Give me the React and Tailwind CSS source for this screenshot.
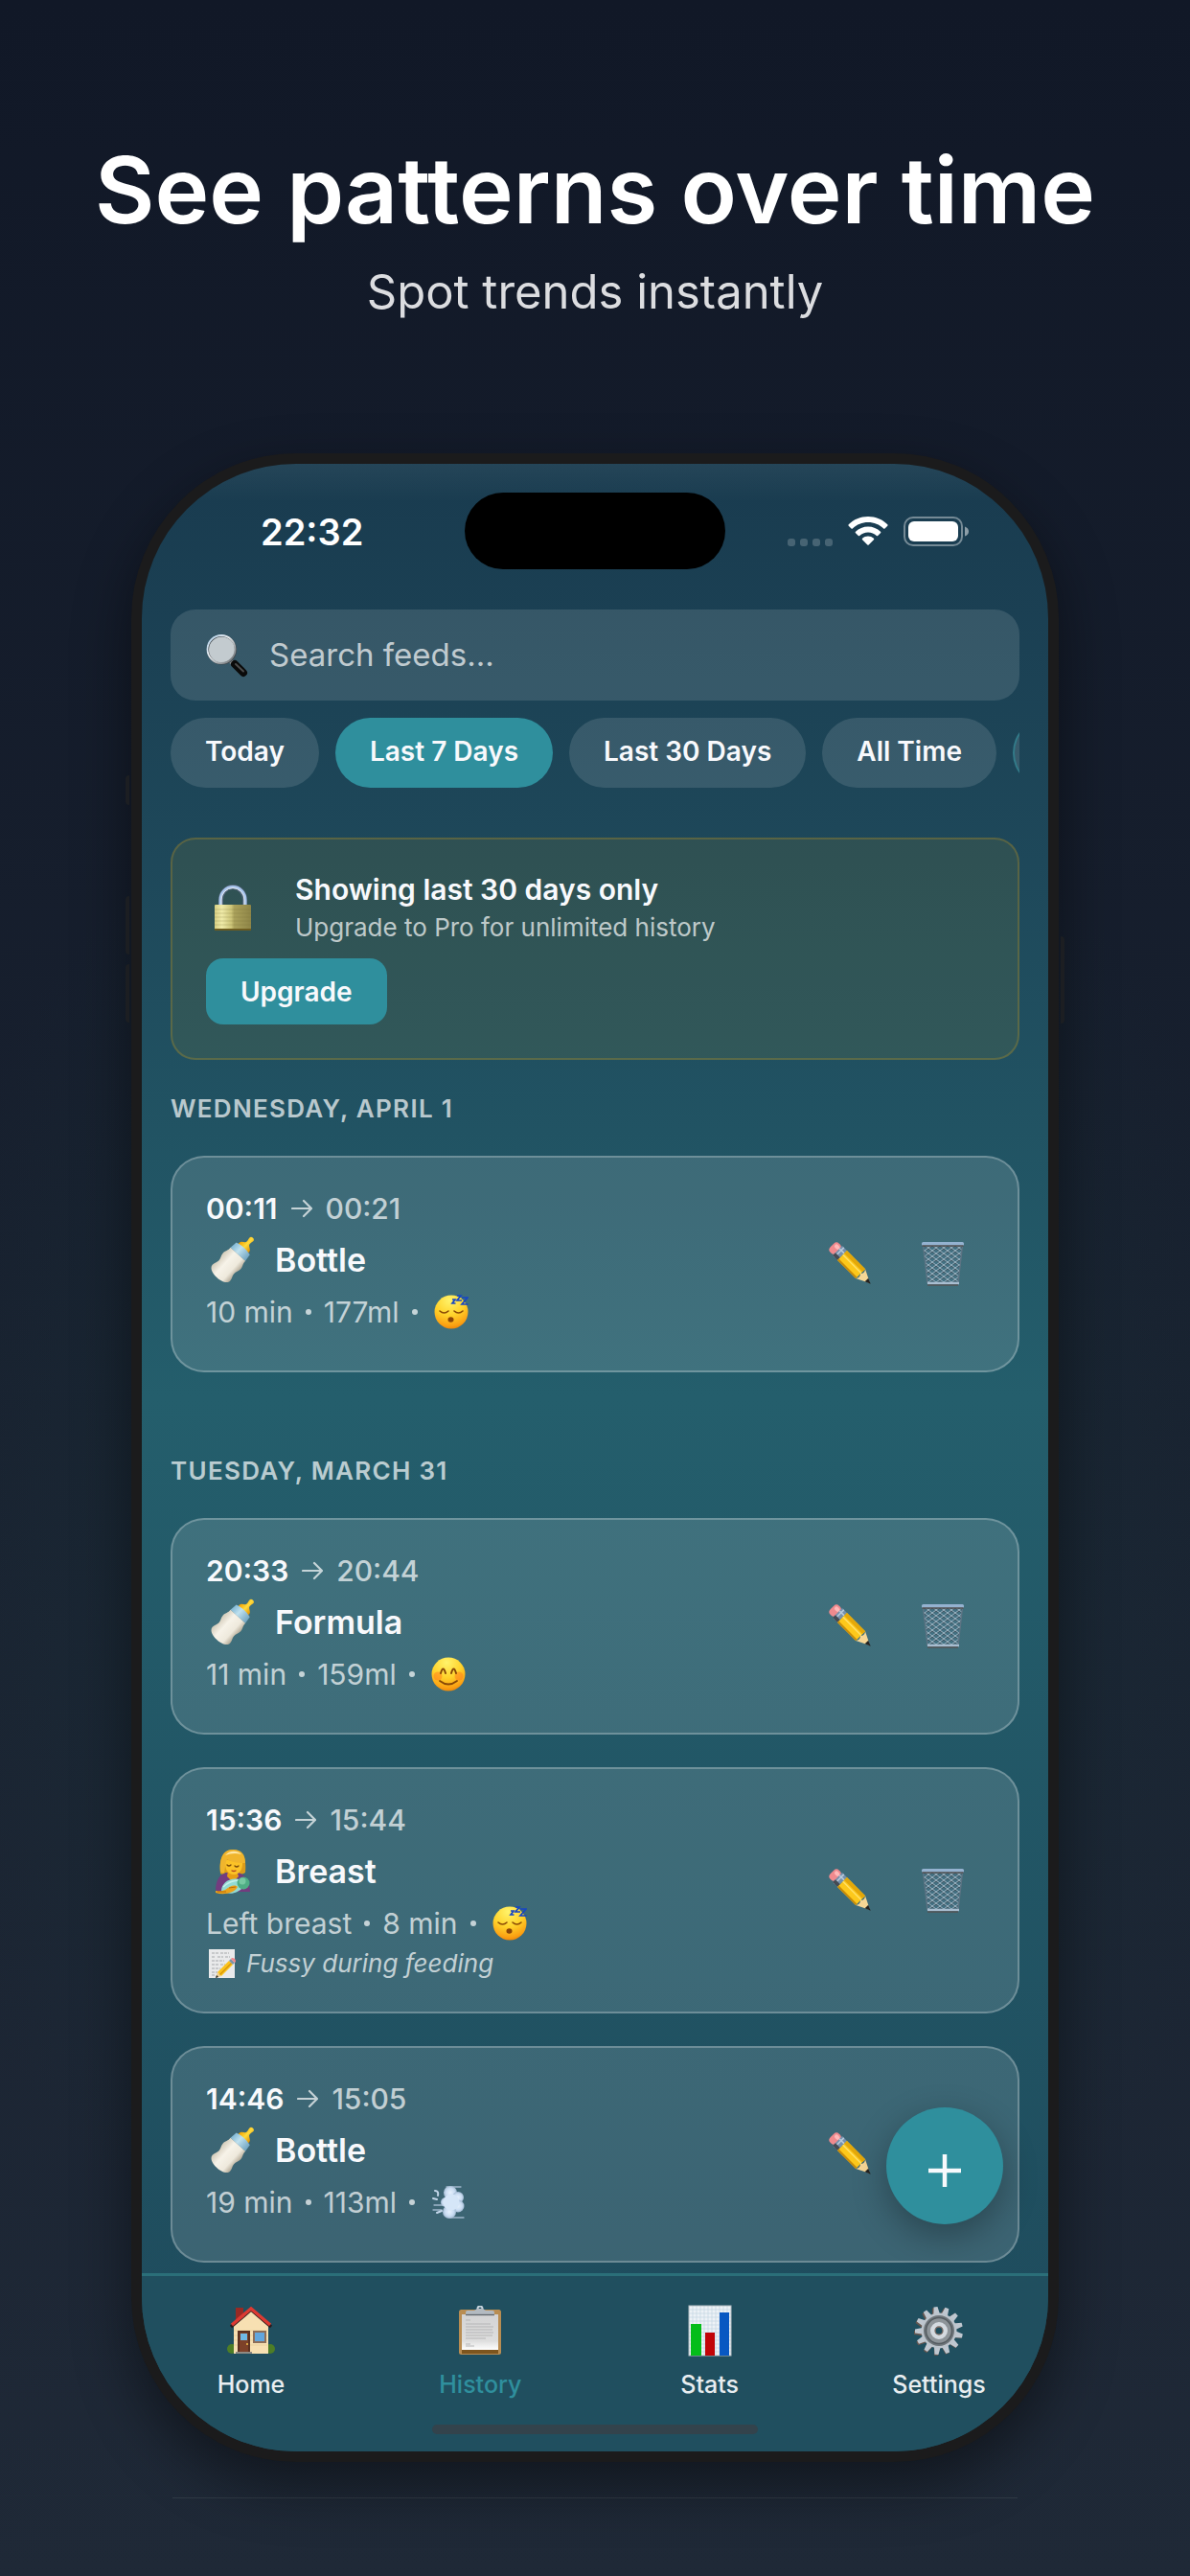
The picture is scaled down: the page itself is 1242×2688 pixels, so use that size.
import React, { useState } from 'react';

// --- Icons ---

function SearchIcon() {
  return (
    <svg viewBox="0 0 48 48" className="w-[48px] h-[48px] shrink-0" aria-hidden="true">
      <defs>
        <linearGradient id="lens-rim" x1="0" y1="0" x2="1" y2="1">
          <stop offset="0" stopColor="#a9cbe8" />
          <stop offset="0.4" stopColor="#e9edf0" />
          <stop offset="1" stopColor="#5c6266" />
        </linearGradient>
      </defs>
      <path d="M28 30 32 34" stroke="#85898c" strokeWidth="5" />
      <path d="M32 33 41 42" stroke="#0a0a0a" strokeWidth="8" strokeLinecap="round" />
      <path d="M33 33 41 40.500" stroke="#4b4b4b" strokeWidth="2" strokeLinecap="round" />
      <circle cx="18.500" cy="18" r="14.500" fill="#c3cbcf" stroke="#3f4549" strokeWidth="2" />
      <circle cx="18" cy="17.500" r="14.500" fill="none" stroke="url(#lens-rim)" strokeWidth="1.800" />
    </svg>
  );
}

function LockIcon() {
  return (
    <svg viewBox="0 0 56 56" className="w-[56px] h-[56px]" aria-hidden="true">
      <defs>
        <linearGradient id="lock-body">
          <stop offset="0" stopColor="#d8d084" />
          <stop offset="0.2" stopColor="#efeaa8" />
          <stop offset="0.46" stopColor="#ccc478" />
          <stop offset="0.54" stopColor="#aaa15b" />
          <stop offset="1" stopColor="#8e8547" />
        </linearGradient>
      </defs>
      <path d="M15.500 27v-7a12.500 13.500 0 0 1 25 0v7" fill="none" stroke="#53667a" strokeWidth="5" />
      <path d="M15 27v-7a13 13.500 0 0 1 26 0v7" fill="none" stroke="#a9c6ee" strokeWidth="3" />
      <path d="M16 27v-7a12 12.500 0 0 1 24 0v7" fill="none" stroke="#e3e9ee" strokeWidth="1" />
      <rect x="9" y="25" width="38" height="27" rx="1" fill="url(#lock-body)" />
      <path d="M9 30h38M9 34h38M9 38h38M9 42h38M9 46h38" stroke="#7d743a" strokeOpacity="0.25" />
      <path d="M9 51h38" stroke="#6d5c20" strokeWidth="2" />
    </svg>
  );
}

function BottleIcon() {
  return (
    <svg viewBox="0 0 54 54" className="w-[54px] h-[54px]" aria-hidden="true">
      <defs>
        <linearGradient id="milk">
          <stop offset="0" stopColor="#d3cbb9" />
          <stop offset="0.35" stopColor="#f7f3e9" />
          <stop offset="0.75" stopColor="#eee9dc" />
          <stop offset="1" stopColor="#b5ab98" />
        </linearGradient>
        <linearGradient id="teat">
          <stop offset="0" stopColor="#f2a100" />
          <stop offset="0.5" stopColor="#ffdc3d" />
          <stop offset="1" stopColor="#e29100" />
        </linearGradient>
        <linearGradient id="collar">
          <stop offset="0" stopColor="#7fb6d3" />
          <stop offset="0.4" stopColor="#bfe1ef" />
          <stop offset="1" stopColor="#6fa3c0" />
        </linearGradient>
      </defs>
      <g transform="translate(-1 2) rotate(42 27 27)">
        <path d="M20 6c0-3 5-3.500 5-6 0-3-.7-3-.7-5 0-3 5.400-3 5.400 0 0 2-.7 2-.7 5 0 2.500 5 3 5 6v3H20z" fill="url(#teat)" />
        <path d="M17.500 8q9.500-3 19 0l1 8H16.500z" fill="url(#collar)" />
        <path d="M16.500 16h21c-.5 4 2 6 2 10 0 3-2 5-2 8s2 5 2 8c0 9-25 9-25 0 0-3 2-5 2-8s-2-5-2-8c0-4 2.500-6 2-10z" fill="url(#milk)" />
      </g>
    </svg>
  );
}

function NursingIcon() {
  return (
    <svg viewBox="0 0 54 54" className="w-[54px] h-[54px]" aria-hidden="true">
      <path d="M15 29C14 18 15 4 28 4s14 13 13 24c-3 2-7 2-9 0H20c-1 2-4 2-5 1z" fill="#dc9c1a" />
      <path d="M10 45c1-10 4-15 12-17h11c8 2 12 7 13 20H11z" fill="#733c7f" />
      <path d="M23 26h9l2 6-6 6-6-6z" fill="#e79e14" />
      <path d="M20 14c5 2 12 2 18 0 1 9-2 16-9 16s-10-7-9-16z" fill="#fbc227" />
      <path d="M15 27C14 15 17 4 28 4c9 0 13 5 13 14-5 0-14 0-19-4-2 4-2 10-3 14-1 1-3 0-4-1z" fill="#f0b52d" />
      <path d="M20 10c4-5 12-6 17-1-6-2-12-1-17 1z" fill="#ffe7a4" />
      <path d="M22 20q2 2 4 0M30 21q2 2 4 0" fill="none" stroke="#7a4a0b" strokeWidth="1.300" strokeLinecap="round" />
      <path d="M27 26q2 1 4 0" fill="none" stroke="#b3441d" strokeWidth="1.300" strokeLinecap="round" />
      <path d="M16 47c0-8 9-14 18-12l5 8c-6 7-15 9-23 4z" fill="#93dbd3" />
      <path d="M18 43c5-5 11-7 17-7" fill="none" stroke="#c6f2ec" strokeWidth="1.500" />
      <circle cx="39" cy="39" r="6.500" fill="#4fae85" />
      <circle cx="38" cy="37" r="3.500" fill="#76c9a2" />
      <path d="M10 47c3 0 5 1 10-1 5-4 10-6 13-3-3 6-14 9-23 6z" fill="#eca21a" />
      <path d="M12 48h9M24 44l7-1" stroke="#b96f0a" strokeWidth="1" />
    </svg>
  );
}

function PencilIcon() {
  return (
    <svg viewBox="0 0 46 46" className="w-[46px] h-[46px]" aria-hidden="true">
      <g transform="translate(2 2) rotate(45) translate(2 0)">
        <rect x="0" y="-6.500" width="9" height="13" rx="4" fill="#f08a8e" />
        <rect x="2" y="-4.500" width="6" height="4" rx="2" fill="#ffb9b9" />
        <rect x="8" y="-7" width="7" height="14" fill="#7590ad" />
        <path d="M8-3h7M10.500-7v14" stroke="#b9cadb" strokeWidth="1.500" />
        <path d="M8 5h7" stroke="#454b54" strokeWidth="4" />
        <path d="M15-7h27v14H15z" fill="#fdc81b" />
        <path d="M15-7h27v4H15z" fill="#e4a80a" />
        <path d="M15-1h27" stroke="#ffe067" strokeWidth="1.500" />
        <path d="M15 6h27" stroke="#c98c0a" strokeWidth="2" />
        <path d="M42-7 56 0 42 7q3-3.500 0-7 3-3.500 0-7z" fill="#f6d695" />
        <path d="M51-2.500 57 0l-6 2.500z" fill="#222" />
      </g>
    </svg>
  );
}

function TrashIcon() {
  return (
    <svg viewBox="0 0 46 46" className="w-[46px] h-[46px]" aria-hidden="true">
      <defs>
        <pattern id="mesh" width="8" height="6" patternUnits="userSpaceOnUse">
          <path d="M0 1 8 7M8 1 0 7M0-5 8 1M8-5 0 1" stroke="#43535e" strokeWidth="0.900" />
          <path d="M0 0 8 6M8 0 0 6" stroke="#a3bccb" strokeWidth="0.900" />
        </pattern>
      </defs>
      <path d="M2.500 4h41L39 44H7z" fill="#47748a" fillOpacity="0.5" />
      <path d="M2.500 4h41L39 44H7z" fill="url(#mesh)" />
      <path d="M2.500 4 7 43M43.500 4 39 43" stroke="#5c7383" strokeWidth="1.300" />
      <rect x="1" y="0" width="44" height="4" rx="1.500" fill="#94b2d0" />
      <path d="M1.500 4h43" stroke="#514f50" strokeWidth="1.600" />
      <path d="M7 43h33" stroke="#a8bdd0" strokeWidth="2.500" />
      <path d="M7 45h32" stroke="#55504f" strokeWidth="1.300" />
    </svg>
  );
}

function FaceGradient() {
  return (
    <defs>
      <radialGradient id="face" cx="0.45" cy="0.15" r="0.9">
        <stop offset="0" stopColor="#fff36b" />
        <stop offset="0.5" stopColor="#ffd32b" />
        <stop offset="0.85" stopColor="#fb9f12" />
        <stop offset="1" stopColor="#e97c05" />
      </radialGradient>
    </defs>
  );
}

function SleepyIcon() {
  return (
    <svg viewBox="0 0 36 36" className="w-[36px] h-[36px]" role="img" aria-label="Sleepy">
      <FaceGradient />
      <circle cx="18" cy="18" r="17.500" fill="url(#face)" />
      <path d="M6 17q4.500 4 9 0M21 17q4.500 4 9 0" fill="none" stroke="#8a4a06" strokeWidth="1.600" strokeLinecap="round" />
      <ellipse cx="17.500" cy="26" rx="3" ry="2.800" fill="#8a4508" />
      <path d="M19 5h3l-3 4h3.500M24 1h4l-4 5h5M29 3h6l-6 7h6.500" fill="none" stroke="#1746c4" strokeWidth="1.700" />
    </svg>
  );
}

function HappyIcon() {
  return (
    <svg viewBox="0 0 36 36" className="w-[36px] h-[36px]" role="img" aria-label="Happy">
      <FaceGradient />
      <circle cx="18" cy="18" r="17.500" fill="url(#face)" />
      <circle cx="7" cy="20" r="4.500" fill="#ff7a1c" fillOpacity="0.5" />
      <circle cx="29" cy="20" r="4.500" fill="#ff7a1c" fillOpacity="0.5" />
      <path d="M10 17q2.500-9 5 0M21 17q2.500-9 5 0" fill="none" stroke="#874706" strokeWidth="2" strokeLinecap="round" />
      <path d="M9 25q9 7 18 0" fill="none" stroke="#874706" strokeWidth="1.800" strokeLinecap="round" />
    </svg>
  );
}

function GassyIcon() {
  return (
    <svg viewBox="0 0 36 36" className="w-[36px] h-[36px]" role="img" aria-label="Gassy">
      <defs>
        <radialGradient id="puff">
          <stop offset="0" stopColor="#e6f1fd" />
          <stop offset="0.65" stopColor="#c9dcf2" />
          <stop offset="1" stopColor="#a3bad2" />
        </radialGradient>
      </defs>
      <path d="M16 2h15M20 34h14M3 21h10M2 26h9" stroke="#9fb6cc" strokeWidth="1.300" strokeLinecap="round" />
      <circle cx="20" cy="8" r="7" fill="url(#puff)" />
      <circle cx="28" cy="13" r="6" fill="url(#puff)" />
      <circle cx="28" cy="22" r="6.500" fill="url(#puff)" />
      <circle cx="19" cy="28" r="7" fill="url(#puff)" />
      <circle cx="15" cy="18" r="5" fill="url(#puff)" />
      <circle cx="21" cy="18" r="8.500" fill="#d5e6f8" />
      <path d="M4 6q4 0 3 5M2 14l4 1M6 29l5-2" fill="none" stroke="#c3d6ea" strokeWidth="2" strokeLinecap="round" />
    </svg>
  );
}

function NoteIcon() {
  return (
    <svg viewBox="0 0 32 32" className="w-[32px] h-[32px]" aria-hidden="true">
      <rect x="3" y="1" width="27" height="30" fill="#e9eaeb" />
      <path d="M6 5h7m2 0h9M6 9h4m2 0h6m2 0h5M6 13h13M6 17h7m2 0h5M6 21h9M6 25h6M6 28h4" stroke="#a5a8ab" strokeWidth="1" strokeDasharray="3 1" />
      <path d="M10 31l2-6 4 4z" fill="#f0cf8e" />
      <path d="m10 31 1-3 2 2z" fill="#222" />
      <path d="M12 25 24 13l4 4-12 12z" fill="#fbc31d" />
      <path d="M14.500 27.500 26.500 15.500" stroke="#d99708" strokeWidth="1.500" />
      <path d="m24 13 2-2 4 4-2 2z" fill="#7e93a8" />
      <path d="m26 11 1-1q4 0 4 4l-1 1z" fill="#f3898d" />
    </svg>
  );
}

function HomeIcon() {
  return (
    <svg viewBox="0 0 50 50" className="w-[50px] h-[50px]" aria-hidden="true">
      <rect x="9" y="1" width="8" height="15" fill="#962a25" />
      <circle cx="5" cy="44" r="5" fill="#4d7d26" />
      <circle cx="45" cy="44" r="5" fill="#4d7d26" />
      <path d="M7 20 25 4l18 16v29H7z" fill="#f7e0b2" />
      <path d="M7 25h35M7 30h35M7 35h35M7 40h35" stroke="#dfc38e" strokeOpacity="0.5" />
      <path d="M4 21 25 3l21 18" fill="none" stroke="#2a1b1c" strokeWidth="3.500" />
      <path d="M5 19 25 2l20 17" fill="none" stroke="#dd3a32" strokeWidth="3.500" />
      <rect x="11" y="25" width="13" height="23" fill="#5b3120" />
      <rect x="13" y="27" width="9" height="21" fill="#7d4129" />
      <rect x="14" y="28" width="7" height="7" fill="#6fb9e6" />
      <circle cx="21" cy="39" r="1" fill="#f2c14b" />
      <rect x="27" y="25" width="14" height="13" fill="#8d6e58" />
      <rect x="29" y="27" width="10" height="9" fill="#62a6dd" />
      <path d="M9 47h17v2H9z" fill="#8f8a83" />
    </svg>
  );
}

function ClipboardIcon() {
  return (
    <svg viewBox="0 0 50 52" className="w-[50px] h-[52px]" aria-hidden="true">
      <defs>
        <linearGradient id="paper" x1="0" y1="0" x2="0" y2="1">
          <stop offset="0" stopColor="#d3d3d4" />
          <stop offset="0.75" stopColor="#dedede" />
          <stop offset="1" stopColor="#fff" />
        </linearGradient>
      </defs>
      <rect x="3" y="4" width="44" height="47" rx="2.500" fill="#b98d52" />
      <path d="M6 46h38v4H6z" fill="#7d551e" />
      <rect x="6" y="9" width="38" height="37" fill="url(#paper)" />
      <path d="M10 15h5M10 19h26M10 22h29M10 25h28M10 28h29M10 31h28M10 34h21M10 40h5M10 42h9" stroke="#b5b5b6" strokeWidth="1" />
      <circle cx="25" cy="3" r="2.500" fill="none" stroke="#c7d4de" strokeWidth="2" />
      <path d="M10 9V7q0-2 2-2h7l3-2h6l3 2h7q2 0 2 2v2z" fill="#b3bac1" />
      <path d="M10 9.500h30" stroke="#60666b" strokeWidth="1.300" />
    </svg>
  );
}

function ChartIcon() {
  return (
    <svg viewBox="0 0 46 54" className="w-[46px] h-[54px]" aria-hidden="true">
      <rect x="1" y="1" width="44" height="52" fill="#edf2f6" />
      <path d="M1 5h44M1 9h44M1 13h44M1 17h44M1 21h44M1 25h44M1 29h44M1 33h44M1 37h44M1 41h44M1 45h44M1 49h44M5 1v52M9 1v52M13 1v52M17 1v52M21 1v52M25 1v52M29 1v52M33 1v52M37 1v52M41 1v52" stroke="#c3d5e2" strokeWidth="0.700" />
      <rect x="1" y="1" width="44" height="52" fill="none" stroke="#b4bdc3" />
      <rect x="3" y="20" width="11" height="33" fill="#04bd19" />
      <rect x="18" y="29" width="10" height="24" fill="#c10508" />
      <rect x="33" y="8" width="10" height="45" fill="#0858c2" />
    </svg>
  );
}

function GearIcon() {
  const teeth = Array.from({ length: 13 }, (_, i) => (i * 360) / 13 - 8);
  return (
    <svg viewBox="0 0 52 52" className="w-[52px] h-[52px]" aria-hidden="true">
      {teeth.map((angle) => (
        <path key={`s${angle}`} d="M22 9.500 23.500 1h4l1 8.500z" fill="#66564f" transform={`translate(-1 1) rotate(${angle} 26 26)`} />
      ))}
      {teeth.map((angle) => (
        <path key={angle} d="M22.500 10 24 1h4l1.500 9z" fill="#bfc7d0" transform={`rotate(${angle} 26 26)`} />
      ))}
      <circle cx="26" cy="26" r="18.500" fill="#bcc4cc" />
      <circle cx="26" cy="26" r="16" fill="#6f767b" />
      <circle cx="26" cy="26" r="13.500" fill="#8d9499" stroke="#555c61" strokeWidth="1.500" />
      <circle cx="26" cy="26" r="6.500" fill="none" stroke="#d4dae0" strokeWidth="5" />
      <circle cx="26" cy="26" r="4" fill="#204f5f" stroke="#7d6d66" strokeWidth="1.300" />
    </svg>
  );
}

function WifiIcon() {
  return (
    <svg viewBox="0 0 42 31" className="w-[42px] h-[31px]" fill="#fff" aria-hidden="true">
      <path d="M21 0C13 0 6 3 .7 8.300a1 1 0 0 0 0 1.400L3.500 12.500a1 1 0 0 0 1.400 0C9.200 8.300 14.800 6 21 6s11.800 2.300 16.100 6.500a1 1 0 0 0 1.400 0l2.800-2.800a1 1 0 0 0 0-1.400C36 3 29 0 21 0z" />
      <path d="M21 10.500c-5 0-9.600 2-13 5.200a1 1 0 0 0 0 1.500l2.800 2.700a1 1 0 0 0 1.400 0c2.300-2.200 5.400-3.500 8.800-3.500s6.500 1.300 8.800 3.500a1 1 0 0 0 1.400 0l2.800-2.700a1 1 0 0 0 0-1.500c-3.400-3.200-8-5.200-13-5.200z" />
      <path d="M21 20.500c-2.300 0-4.300.8-5.900 2.200a1 1 0 0 0 0 1.500l5.200 5.200a1 1 0 0 0 1.400 0l5.200-5.200a1 1 0 0 0 0-1.500 9 9 0 0 0-5.900-2.200z" />
    </svg>
  );
}

function BatteryIcon() {
  return (
    <svg viewBox="0 0 68 31" className="w-[68px] h-[31px]" aria-hidden="true">
      <rect x="1" y="1" width="60" height="29" rx="9" fill="none" stroke="#fff" strokeOpacity="0.4" strokeWidth="2" />
      <rect x="5" y="5" width="52" height="21" rx="6" fill="#fff" />
      <path d="M64 10.500q4 1.500 4 5t-4 5z" fill="#fff" fillOpacity="0.5" />
    </svg>
  );
}

function ArrowIcon() {
  return (
    <svg viewBox="0 0 22 22" className="w-[22px] h-[22px]" fill="none" stroke="currentColor" strokeWidth="2.200" strokeLinecap="round" strokeLinejoin="round" aria-hidden="true">
      <path d="M1 11h20M13 3l8 8-8 8" />
    </svg>
  );
}

// --- Data ---

const FILTERS = ['Today', 'Last 7 Days', 'Last 30 Days', 'All Time'];

const DAYS = [
  {
    label: 'WEDNESDAY, APRIL 1',
    feeds: [
      { start: '00:11', end: '00:21', type: 'Bottle', icon: BottleIcon, details: ['10 min', '177ml'], mood: SleepyIcon },
    ],
  },
  {
    label: 'TUESDAY, MARCH 31',
    feeds: [
      { start: '20:33', end: '20:44', type: 'Formula', icon: BottleIcon, details: ['11 min', '159ml'], mood: HappyIcon },
      { start: '15:36', end: '15:44', type: 'Breast', icon: NursingIcon, details: ['Left breast', '8 min'], mood: SleepyIcon, note: 'Fussy during feeding' },
      { start: '14:46', end: '15:05', type: 'Bottle', icon: BottleIcon, details: ['19 min', '113ml'], mood: GassyIcon },
    ],
  },
];

const TABS = [
  { label: 'Home', icon: HomeIcon },
  { label: 'History', icon: ClipboardIcon },
  { label: 'Stats', icon: ChartIcon },
  { label: 'Settings', icon: GearIcon },
];

// --- Screen parts ---

function StatusBar() {
  return (
    <div className="relative flex h-[152px] items-start justify-between pt-[50px]">
      <div className="absolute inset-x-0 top-[30px] mx-auto w-[272px] h-[80px] rounded-full bg-black" />
      <span className="pl-[124px] text-[38px] leading-[42px] font-semibold text-white">22:32</span>
      <div className="flex h-[36px] items-end gap-[16px] pr-[83px]">
        <div className="flex gap-[5px]">
          {[0, 1, 2, 3].map((dot) => (
            <span key={dot} className="size-2 rounded-[3px] bg-white/20" />
          ))}
        </div>
        <WifiIcon />
        <BatteryIcon />
      </div>
    </div>
  );
}

function UpgradeBanner() {
  return (
    <section className="mt-[52px] rounded-[26px] border-2 border-[#ffb107]/20 bg-[#ffb907]/8 px-[35px] pt-[34px] pb-[35px]">
      <div className="flex items-center gap-[37px]">
        <LockIcon />
        <div>
          <h2 className="text-[30px] leading-[36px] font-semibold">Showing last 30 days only</h2>
          <p className="mt-[7px] text-[26px] leading-[30px] text-white/70">Upgrade to Pro for unlimited history</p>
        </div>
      </div>
      <button className="mt-[17px] h-[69px] rounded-[18px] bg-[#2f8f9d] px-[36px] text-[28px] font-semibold">
        Upgrade
      </button>
    </section>
  );
}

function FeedCard({ feed }) {
  const TypeIcon = feed.icon;
  const MoodIcon = feed.mood;
  return (
    <article className="flex min-h-[226px] rounded-[35px] border-2 border-white/25 bg-white/13 pl-[35px] pr-[55px] py-[35px]">
      <div className="flex-1">
        <div className="flex items-center gap-[14px] text-[30px] leading-[36px] text-white/70">
          <span className="font-semibold text-[#f8f9fc]">{feed.start}</span>
          <ArrowIcon />
          <span className="font-medium">{feed.end}</span>
        </div>
        <div className="my-2 flex h-[56px] items-center gap-[18px]">
          <TypeIcon />
          <h3 className="text-[34px] leading-[40px] font-semibold">{feed.type}</h3>
        </div>
        <div className="flex h-[36px] items-center gap-[13px] text-[30px] leading-[36px] text-white/70">
          {feed.details.map((detail) => (
            <React.Fragment key={detail}>
              <span>{detail}</span>
              <span className="size-[6px] rounded-full bg-white/70" />
            </React.Fragment>
          ))}
          <span className="pl-[4px]"><MoodIcon /></span>
        </div>
        {feed.note && (
          <div className="mt-[9px] flex h-[30px] items-center gap-[10px] text-[26px] leading-[30px] italic text-white/70">
            <NoteIcon />
            <span>{feed.note}</span>
          </div>
        )}
      </div>
      <div className="flex items-center gap-[50px]">
        <button aria-label="Edit feed"><PencilIcon /></button>
        <button aria-label="Delete feed"><TrashIcon /></button>
      </div>
    </article>
  );
}

function TabBar({ active, onSelect }) {
  return (
    <nav className="relative h-[186px] border-t-3 border-[#2b6f79] bg-[#204f5f] px-[34px] pt-[30px]">
      <div className="flex justify-between">
        {TABS.map((tab) => {
          const Icon = tab.icon;
          return (
            <button
              key={tab.label}
              onClick={() => onSelect(tab.label)}
              className={`flex w-[160px] flex-col items-center gap-[14px] text-[25px] leading-[30px] font-medium ${
                active === tab.label ? 'text-[#2f8f9d]' : 'text-[#e8edf0]'
              }`}
            >
              <span className="flex h-[54px] items-center"><Icon /></span>
              {tab.label}
            </button>
          );
        })}
      </div>
      <div className="absolute inset-x-0 bottom-[18px] mx-auto h-[10px] w-[340px] rounded-full bg-[#33434c]" />
    </nav>
  );
}

// --- Page ---

export default function App() {
  const [range, setRange] = useState('Last 7 Days');
  const [tab, setTab] = useState('History');

  return (
    <div className="min-h-screen bg-[radial-gradient(ellipse_760px_900px_at_50%_60%,#1b3a3f80,transparent),linear-gradient(to_bottom,#111827,#1f2937)] px-[137px] pb-[80px] font-['Inter',sans-serif] text-[#f8f9fc]">
      <header className="-mx-[100px] flex flex-col items-center pt-[136px] text-center">
        <h1 className="text-[96px] leading-[124px] font-semibold text-white">See patterns over time</h1>
        <p className="mt-[12px] text-[49px] leading-[66px] text-[#dcdde0]">Spot trends instantly</p>
      </header>

      <div className="relative mt-[135px] rounded-[172px] bg-[#1b1b1c] p-[11px] shadow-[0_24px_60px_rgba(0,0,0,0.45)]">
        <span className="absolute -left-[6px] top-[336px] h-[31px] w-[4px] rounded-l-sm bg-[#1c1e22]" />
        <span className="absolute -left-[6px] top-[462px] h-[61px] w-[4px] rounded-l-sm bg-[#1c1e22]" />
        <span className="absolute -left-[6px] top-[533px] h-[61px] w-[4px] rounded-l-sm bg-[#1c1e22]" />
        <span className="absolute -right-[6px] top-[504px] h-[91px] w-[4px] rounded-r-sm bg-[#1c1e22]" />

        <div className="overflow-hidden rounded-[161px] bg-[linear-gradient(to_bottom,#ffffff0d,transparent_40px),linear-gradient(to_bottom,#193b4f,#1e485a_20%,#245e6c_47%,#1f4d5e_92%)]">
          <StatusBar />
          <main className="relative px-[30px] pb-[11px]">
            <label className="flex h-[95px] items-center gap-[20px] rounded-[26px] bg-white/12 px-[35px]">
              <SearchIcon />
              <input
                type="search"
                aria-label="Search feeds"
                placeholder="Search feeds..."
                className="w-full bg-transparent text-[33px] outline-none placeholder:text-white/70"
              />
            </label>

            <div className="mt-[18px] flex gap-[17px] overflow-hidden">
              {FILTERS.map((filter) => (
                <button
                  key={filter}
                  onClick={() => setRange(filter)}
                  className={`h-[73px] shrink-0 rounded-full px-[36px] pb-[3px] text-[28px] font-semibold ${
                    range === filter ? 'bg-[#2f8f9d]' : 'bg-white/12'
                  }`}
                >
                  {filter}
                </button>
              ))}
              <button aria-label="More filters" className="h-[73px] w-[150px] shrink-0 rounded-full border-2 border-[#2f8f9d]/60 bg-white/12" />
            </div>

            <UpgradeBanner />

            {DAYS.map((day, index) => (
              <section key={day.label} className={index === 0 ? 'mt-[36px]' : 'mt-[88px]'}>
                <h2 className="mb-[34px] text-[26px] leading-[30px] font-semibold tracking-wider text-white/70">{day.label}</h2>
                <div className="flex flex-col gap-[34px]">
                  {day.feeds.map((feed) => (
                    <FeedCard key={feed.start} feed={feed} />
                  ))}
                </div>
              </section>
            ))}

            <button
              aria-label="Add feed"
              className="absolute right-[47px] bottom-[51px] flex size-[122px] items-center justify-center rounded-full bg-[#2f8f9d] shadow-[0_12px_36px_rgba(0,0,0,0.3)]"
            >
              <svg viewBox="0 0 34 34" className="mt-[10px] w-[34px] h-[34px]" stroke="#f8f9fc" strokeWidth="4.500" aria-hidden="true">
                <path d="M17 0v34M0 17h34" />
              </svg>
            </button>
          </main>
          <TabBar active={tab} onSelect={setTab} />
        </div>
      </div>

      <hr className="mx-[43px] mt-[37px] border-[#303a46]" />
    </div>
  );
}
